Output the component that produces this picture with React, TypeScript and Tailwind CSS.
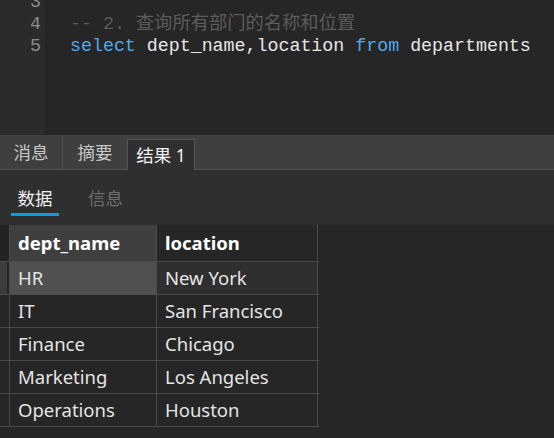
import React from 'react';

const rows = [
  ['HR', 'New York'],
  ['IT', 'San Francisco'],
  ['Finance', 'Chicago'],
  ['Marketing', 'Los Angeles'],
  ['Operations', 'Houston'],
];

const mono = { fontFamily: '"Liberation Mono", "Noto Sans CJK SC", monospace' };
const ui = { fontFamily: '"Noto Sans", "Noto Sans CJK SC", sans-serif' };

function Editor() {
  return (
    <div className="flex h-[135px] shrink-0 overflow-hidden text-[18.3px] leading-[22px]" style={mono}>
      <div className="w-[45px] bg-[#2b2b2b] text-[#8c8c8c] text-right pr-[4px] mt-[-9px]">
        <div>3</div>
        <div>4</div>
        <div>5</div>
      </div>
      <div className="flex-1 bg-[#262626] pl-[25px] mt-[-9px] whitespace-pre">
        <div>&nbsp;</div>
        <div className="text-[#5c5c5c]">-- 2. 查询所有部门的名称和位置</div>
        <div className="text-[#e6e6e6]">
          <span className="text-[#52a8e8]">select</span> dept_name,location{' '}
          <span className="text-[#52a8e8]">from</span> departments
        </div>
      </div>
    </div>
  );
}

function Tabs() {
  return (
    <div className="flex h-[35px] shrink-0 items-end bg-[#3f3f3f] border-b border-[#555555] text-[17.5px]" style={ui}>
      <div className="h-full w-[63px] border-r border-[#505050] flex items-center justify-center text-[#c8c8c8]">消息</div>
      <div className="h-full w-[64px] flex items-center justify-center text-[#c8c8c8]">摘要</div>
      <div className="h-[31px] w-[68px] mb-[-1px] bg-[#2f2f2f] border border-b-0 border-[#555555] flex items-center justify-center text-[#f0f0f0]">
        结果 1
      </div>
    </div>
  );
}

function SubTabs() {
  return (
    <div className="h-[55px] shrink-0 bg-[#2f2f2f] flex items-start gap-[29px] pl-[11px] pt-[14px] text-[17.5px]" style={ui}>
      <div className="w-[48px] flex flex-col items-center">
        <span className="text-[#f0f0f0] leading-[29px]">数据</span>
        <div className="h-[3px] w-full bg-[#0d9be0]" />
      </div>
      <span className="text-[#6e6e6e] leading-[29px]">信息</span>
    </div>
  );
}

function Grid() {
  return (
    <div className="flex-1 bg-[#262626] text-[18.5px]" style={ui}>
      <div className="w-[319px]">
        <div className="flex h-[37px] border-b border-[#4a4a4a]">
          <div className="w-[10px] border-r border-[#4a4a4a] bg-[#232323]" />
          <div className="w-[147px] bg-[#3f3f3f] border-r border-[#4a4a4a] pl-[8px] flex items-center font-bold text-white">dept_name</div>
          <div className="w-[161px] bg-[#262626] border-r border-[#4a4a4a] pl-[8px] flex items-center font-bold text-white">location</div>
        </div>
        {rows.map(([name, loc], i) => (
          <div key={name} className="flex h-[33px] border-b border-[#4a4a4a]">
            <div className="w-[10px] border-r border-[#4a4a4a] flex">
              {i === 0 ? <div className="w-[7px] bg-[#3c3c3c]" /> : null}
            </div>
            <div
              className={`w-[147px] border-r border-[#4a4a4a] pl-[8px] flex items-center text-[#e4e4e4] ${
                i === 0 ? 'bg-[#505050]' : 'bg-[#262626]'
              }`}
            >
              {name}
            </div>
            <div
              className={`w-[161px] border-r border-[#4a4a4a] pl-[8px] flex items-center text-[#e4e4e4] ${
                i === 0 ? 'bg-[#2f2f2f]' : 'bg-[#262626]'
              }`}
            >
              {loc}
            </div>
          </div>
        ))}
      </div>
    </div>
  );
}

export default function App() {
  return (
    <div className="w-[554px] h-[438px] flex flex-col overflow-hidden bg-[#262626]">
      <Editor />
      <Tabs />
      <SubTabs />
      <Grid />
    </div>
  );
}
